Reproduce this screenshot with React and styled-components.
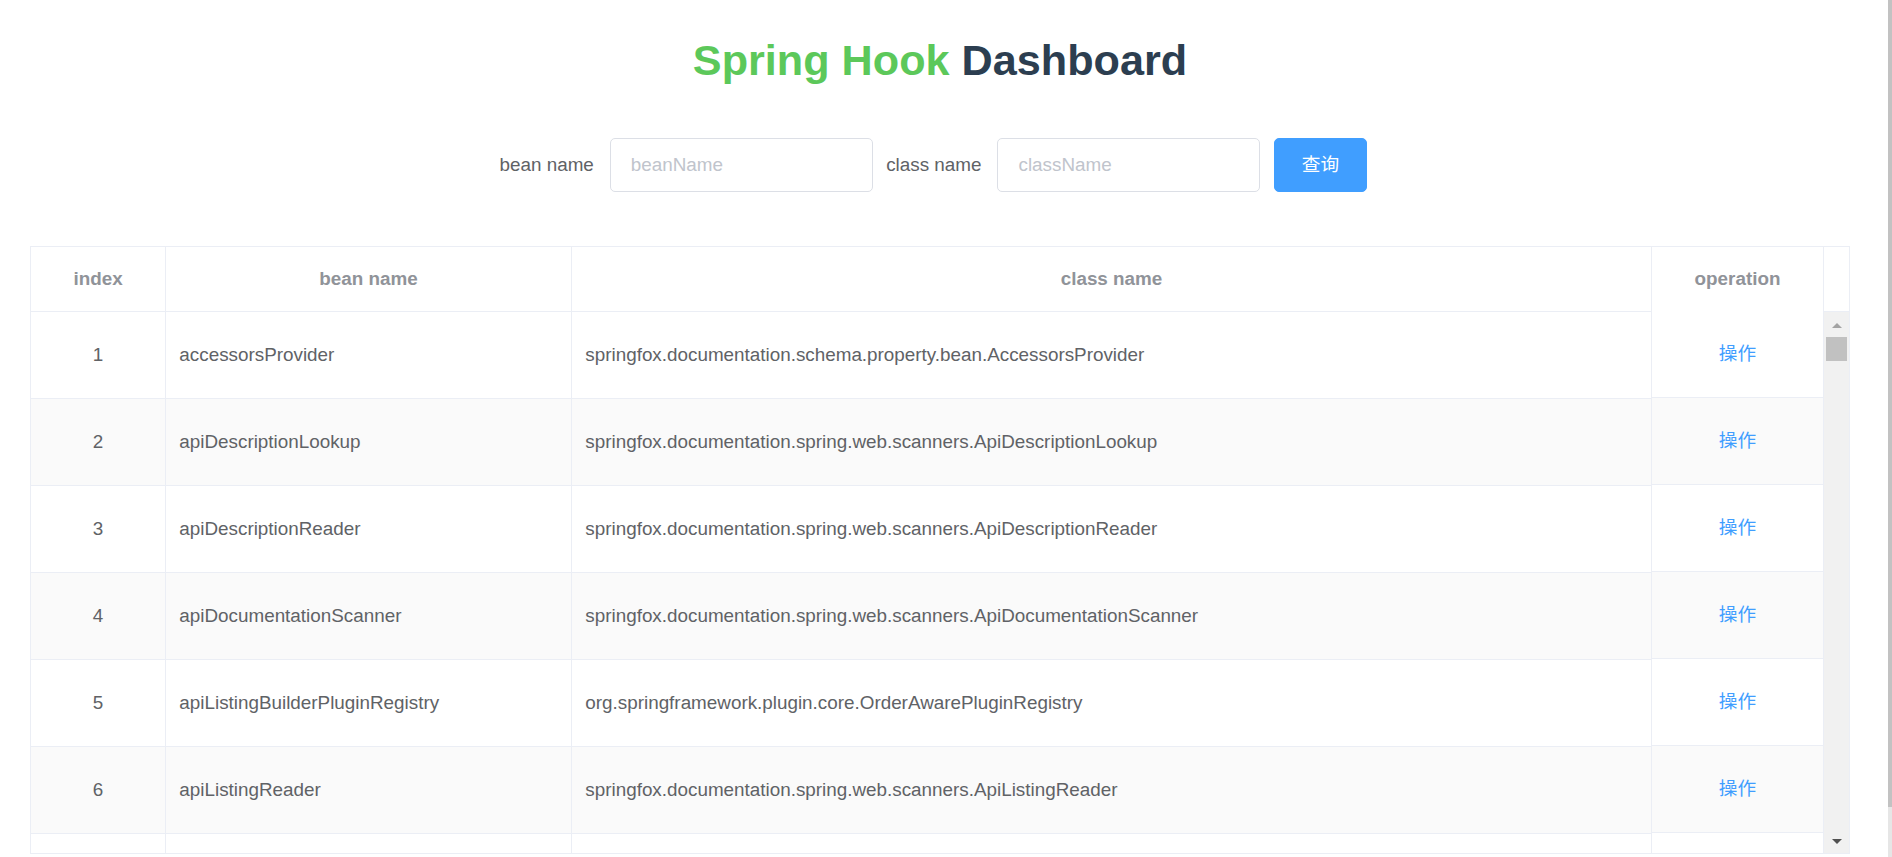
import React from "react";
import styled, { createGlobalStyle } from "styled-components";

const GlobalStyle = createGlobalStyle`
  html, body {
    margin: 0;
    padding: 0;
    height: 100%;
    overflow: hidden;
    background: #ffffff;
  }
  body {
    font-family: "Liberation Sans", Arial, "Noto Sans CJK SC", sans-serif;
  }
  * { box-sizing: border-box; }
`;

const Page = styled.div`
  display: flex;
  height: 100vh;
  width: 100%;
`;

const Main = styled.main`
  flex: 1;
  min-width: 0;
  display: flex;
  flex-direction: column;
  padding: 36px 27px 0 30px;
`;

const Title = styled.h1`
  margin: 0;
  text-align: center;
  font-size: 43.2px;
  line-height: 49px;
  font-weight: bold;
  color: #2c3e50;
`;

const Accent = styled.span`
  color: #5cc85a;
`;

const SearchForm = styled.form`
  display: flex;
  justify-content: center;
  align-items: center;
  margin-top: 53px;
`;

const FormItem = styled.div`
  display: flex;
  align-items: center;
  margin-right: 13.33px;
`;

const Label = styled.label`
  font-size: 18.85px;
  color: #606266;
  padding-right: 16px;
  line-height: 54px;
`;

const Input = styled.input`
  width: 263px;
  height: 54px;
  border: 1px solid #dcdfe6;
  border-radius: 5px;
  padding: 0 20px;
  font-family: inherit;
  font-size: 18.85px;
  color: #606266;
  outline: none;
  background: #fff;
  &::placeholder {
    color: #c0c4cc;
  }
`;

const Button = styled.button`
  height: 54px;
  padding: 0 27px;
  border: 1px solid #409eff;
  border-radius: 5px;
  background: #409eff;
  color: #ffffff;
  font-family: inherit;
  font-size: 18.67px;
  line-height: 1;
  cursor: pointer;
`;

const Table = styled.div`
  margin-top: 54px;
  display: flex;
  height: 608px;
  border: 1px solid #ebeef5;
  overflow: hidden;
`;

const MainPart = styled.div`
  flex: 1;
  min-width: 0;
  display: flex;
  flex-direction: column;
`;

const cols = "135px 406px 1fr";

const HeadRow = styled.div`
  display: grid;
  grid-template-columns: ${cols};
  flex-shrink: 0;
`;

const HeadCell = styled.div`
  height: 65px;
  border-right: 1px solid #ebeef5;
  border-bottom: 1px solid #ebeef5;
  display: flex;
  align-items: center;
  justify-content: center;
  font-weight: bold;
  font-size: 18.85px;
  color: #909399;
`;

const Body = styled.div`
  flex: 1;
  overflow: hidden;
`;

const BodyRow = styled.div`
  display: grid;
  grid-template-columns: ${cols};
  background: ${(p) => (p.$striped ? "#fafafa" : "#ffffff")};
`;

const Cell = styled.div`
  height: 87px;
  border-right: 1px solid #ebeef5;
  border-bottom: 1px solid #ebeef5;
  display: flex;
  align-items: center;
  justify-content: ${(p) => (p.$center ? "center" : "flex-start")};
  padding: 0 13.33px;
  font-size: 18.85px;
  color: #606266;
  white-space: nowrap;
  overflow: hidden;
`;

const OpColumn = styled.div`
  width: 172px;
  flex-shrink: 0;
  display: flex;
  flex-direction: column;
  border-right: 1px solid #ebeef5;
  overflow: hidden;
`;

const OpHead = styled.div`
  height: 64px;
  flex-shrink: 0;
  display: flex;
  align-items: center;
  justify-content: center;
  font-weight: bold;
  font-size: 18.85px;
  color: #909399;
`;

const OpCell = styled.div`
  height: 87px;
  flex-shrink: 0;
  border-bottom: 1px solid #ebeef5;
  display: flex;
  align-items: center;
  justify-content: center;
  background: ${(p) => (p.$striped ? "#fafafa" : "#ffffff")};
`;

const LinkButton = styled.button`
  border: none;
  background: transparent;
  padding: 0;
  color: #409eff;
  font-family: "Liberation Sans", Arial, "Noto Sans CJK SC", sans-serif;
  font-size: 18.67px;
  line-height: 1;
  cursor: pointer;
`;

const Gutter = styled.div`
  width: 25px;
  flex-shrink: 0;
  display: flex;
  flex-direction: column;
`;

const GutterHead = styled.div`
  height: 65px;
  flex-shrink: 0;
  border-bottom: 1px solid #ebeef5;
`;

const ScrollTrack = styled.div`
  flex: 1;
  background: #f1f1f1;
  display: flex;
  flex-direction: column;
  align-items: center;
`;

const UpArrow = styled.div`
  margin-top: 11px;
  width: 0;
  height: 0;
  border-left: 5.5px solid transparent;
  border-right: 5.5px solid transparent;
  border-bottom: 5.5px solid #a3a3a3;
`;

const DownArrow = styled.div`
  margin-top: auto;
  margin-bottom: 9px;
  width: 0;
  height: 0;
  border-left: 5.5px solid transparent;
  border-right: 5.5px solid transparent;
  border-top: 5.5px solid #505050;
`;

const Thumb = styled.div`
  margin-top: 9px;
  width: 21px;
  height: 24px;
  background: #c1c1c1;
`;

const PageGutter = styled.div`
  width: 15px;
  flex-shrink: 0;
  display: flex;
  justify-content: flex-end;
`;

const PageBar = styled.div`
  width: 4px;
  display: flex;
  flex-direction: column;
  background: #e6e6e6;
`;

const PageThumb = styled.div`
  height: 807px;
  background: #c2c2c2;
`;

const rows = [
  ["accessorsProvider", "springfox.documentation.schema.property.bean.AccessorsProvider"],
  ["apiDescriptionLookup", "springfox.documentation.spring.web.scanners.ApiDescriptionLookup"],
  ["apiDescriptionReader", "springfox.documentation.spring.web.scanners.ApiDescriptionReader"],
  ["apiDocumentationScanner", "springfox.documentation.spring.web.scanners.ApiDocumentationScanner"],
  ["apiListingBuilderPluginRegistry", "org.springframework.plugin.core.OrderAwarePluginRegistry"],
  ["apiListingReader", "springfox.documentation.spring.web.scanners.ApiListingReader"],
];

export default function App() {
  return (
    <Page>
      <GlobalStyle />
      <Main>
        <Title>
          <Accent>Spring Hook</Accent> Dashboard
        </Title>
        <SearchForm onSubmit={(e) => e.preventDefault()}>
          <FormItem>
            <Label>bean name</Label>
            <Input placeholder="beanName" />
          </FormItem>
          <FormItem>
            <Label>class name</Label>
            <Input placeholder="className" />
          </FormItem>
          <FormItem>
            <Button type="submit">查询</Button>
          </FormItem>
        </SearchForm>
        <Table>
          <MainPart>
            <HeadRow>
              <HeadCell>index</HeadCell>
              <HeadCell>bean name</HeadCell>
              <HeadCell>class name</HeadCell>
            </HeadRow>
            <Body>
              {rows.map(([bean, cls], i) => (
                <BodyRow key={bean} $striped={i % 2 === 1}>
                  <Cell $center>{i + 1}</Cell>
                  <Cell>{bean}</Cell>
                  <Cell>{cls}</Cell>
                </BodyRow>
              ))}
              <BodyRow>
                <Cell />
                <Cell />
                <Cell />
              </BodyRow>
            </Body>
          </MainPart>
          <OpColumn>
            <OpHead>operation</OpHead>
            {rows.map(([bean], i) => (
              <OpCell key={bean} $striped={i % 2 === 1}>
                <LinkButton type="button">操作</LinkButton>
              </OpCell>
            ))}
            <OpCell />
          </OpColumn>
          <Gutter>
            <GutterHead />
            <ScrollTrack>
              <UpArrow />
              <Thumb />
              <DownArrow />
            </ScrollTrack>
          </Gutter>
        </Table>
      </Main>
      <PageGutter>
        <PageBar>
          <PageThumb />
        </PageBar>
      </PageGutter>
    </Page>
  );
}
